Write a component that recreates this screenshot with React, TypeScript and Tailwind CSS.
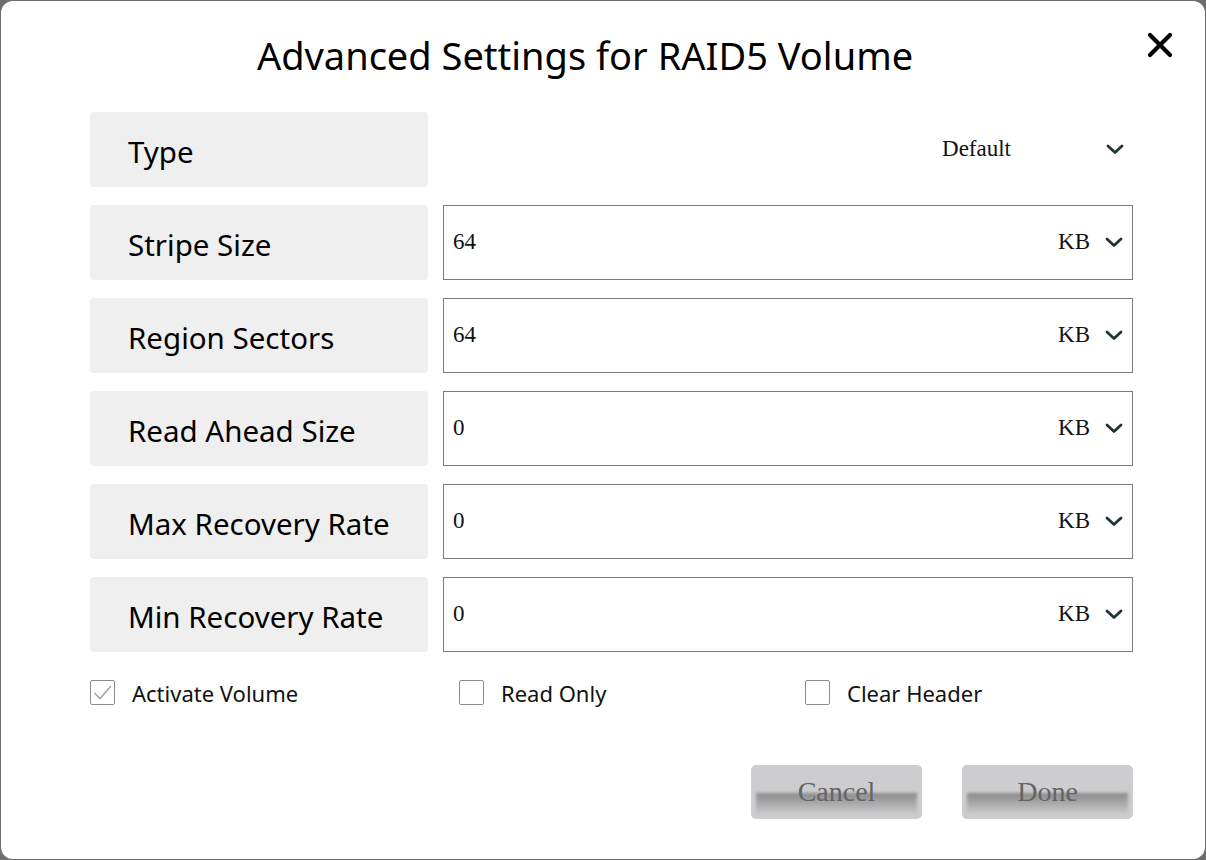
import React from "react";

const sans = { fontFamily: '"Noto Sans", "Open Sans", sans-serif' };
const serif = { fontFamily: '"Liberation Serif", "Times New Roman", serif' };

function Chevron() {
  return (
    <svg width="18" height="11" viewBox="0 0 18 11" className="shrink-0">
      <path d="M2 2 L9 8.5 L16 2" fill="none" stroke="#1d3534" strokeWidth="2.8" strokeLinecap="round" strokeLinejoin="round" />
    </svg>
  );
}

function Label({ text }: { text: string }) {
  return (
    <div className="w-[338px] h-[75px] shrink-0 bg-[#efefef] rounded-[4px] flex items-center pl-[38px] pt-[5px] text-[29.5px] text-black" style={sans}>
      {text}
    </div>
  );
}

function InputRow({ label, value }: { label: string; value: string }) {
  return (
    <div className="flex gap-[15px]">
      <Label text={label} />
      <div className="w-[690px] h-[75px] border border-[#7b7b7b] flex items-center pl-[9px] pr-[9px] text-[23px] text-[#111]" style={serif}>
        <span className="flex-1">{value}</span>
        <span className="mr-[15px]">KB</span>
        <Chevron />
      </div>
    </div>
  );
}

function Check({ label, checked }: { label: string; checked?: boolean }) {
  return (
    <div className="flex items-center gap-[17px] h-[25px]">
      <div className="w-[25px] h-[25px] border border-[#8c8c8c] rounded-[2px] flex items-center justify-center bg-white">
        {checked && (
          <svg width="21" height="21" viewBox="0 0 21 21">
            <path d="M2.5 11 L8 16.5 L19 4" fill="none" stroke="#a6a6a6" strokeWidth="1.6" />
          </svg>
        )}
      </div>
      <span className="text-[22px] leading-none text-[#111]" style={sans}>{label}</span>
    </div>
  );
}

function Btn({ text }: { text: string }) {
  return (
    <div className="relative w-[171px] h-[54px] rounded-[5px] bg-[#cdcdd0] overflow-hidden flex items-center justify-center">
      <div className="absolute left-[5px] right-[5px] top-[28px] h-[22px] bg-gradient-to-b from-[#8a8a8a] to-[#cdcdd0] blur-[1.5px]" />
      <span className="relative text-[28px] text-[#646464] -mt-[1px]" style={serif}>{text}</span>
    </div>
  );
}

export default function App() {
  return (
    <div className="w-[1206px] h-[860px] bg-[#6e6e6e] p-px">
      <div className="w-full h-full bg-white rounded-[12px] flex flex-col">
        <div className="h-[111px] flex items-start relative">
          <div className="flex-1 text-center pr-[36px] pt-[26px] text-[38px] text-black leading-[56px]" style={sans}>
            Advanced Settings for RAID5 Volume
          </div>
          <svg width="26" height="26" viewBox="0 0 26 26" className="absolute left-[1146px] top-[31px]">
            <path d="M3 3 L23 23 M23 3 L3 23" stroke="#000" strokeWidth="4.2" strokeLinecap="round" />
          </svg>
        </div>
        <div className="pl-[89px] flex flex-col gap-[18px]">
          <div className="flex gap-[15px]">
            <Label text="Type" />
            <div className="w-[690px] h-[75px] flex items-center justify-end pr-[9px] text-[23px] text-[#111]" style={serif}>
              <span className="mr-[95px]">Default</span>
              <Chevron />
            </div>
          </div>
          <InputRow label="Stripe Size" value="64" />
          <InputRow label="Region Sectors" value="64" />
          <InputRow label="Read Ahead Size" value="0" />
          <InputRow label="Max Recovery Rate" value="0" />
          <InputRow label="Min Recovery Rate" value="0" />
        </div>
        <div className="pl-[89px] mt-[28px] flex">
          <div className="w-[369px]"><Check label="Activate Volume" checked /></div>
          <div className="w-[346px]"><Check label="Read Only" /></div>
          <Check label="Clear Header" />
        </div>
        <div className="flex justify-end gap-[40px] pr-[72px] mt-[60px]">
          <Btn text="Cancel" />
          <Btn text="Done" />
        </div>
      </div>
    </div>
  );
}
